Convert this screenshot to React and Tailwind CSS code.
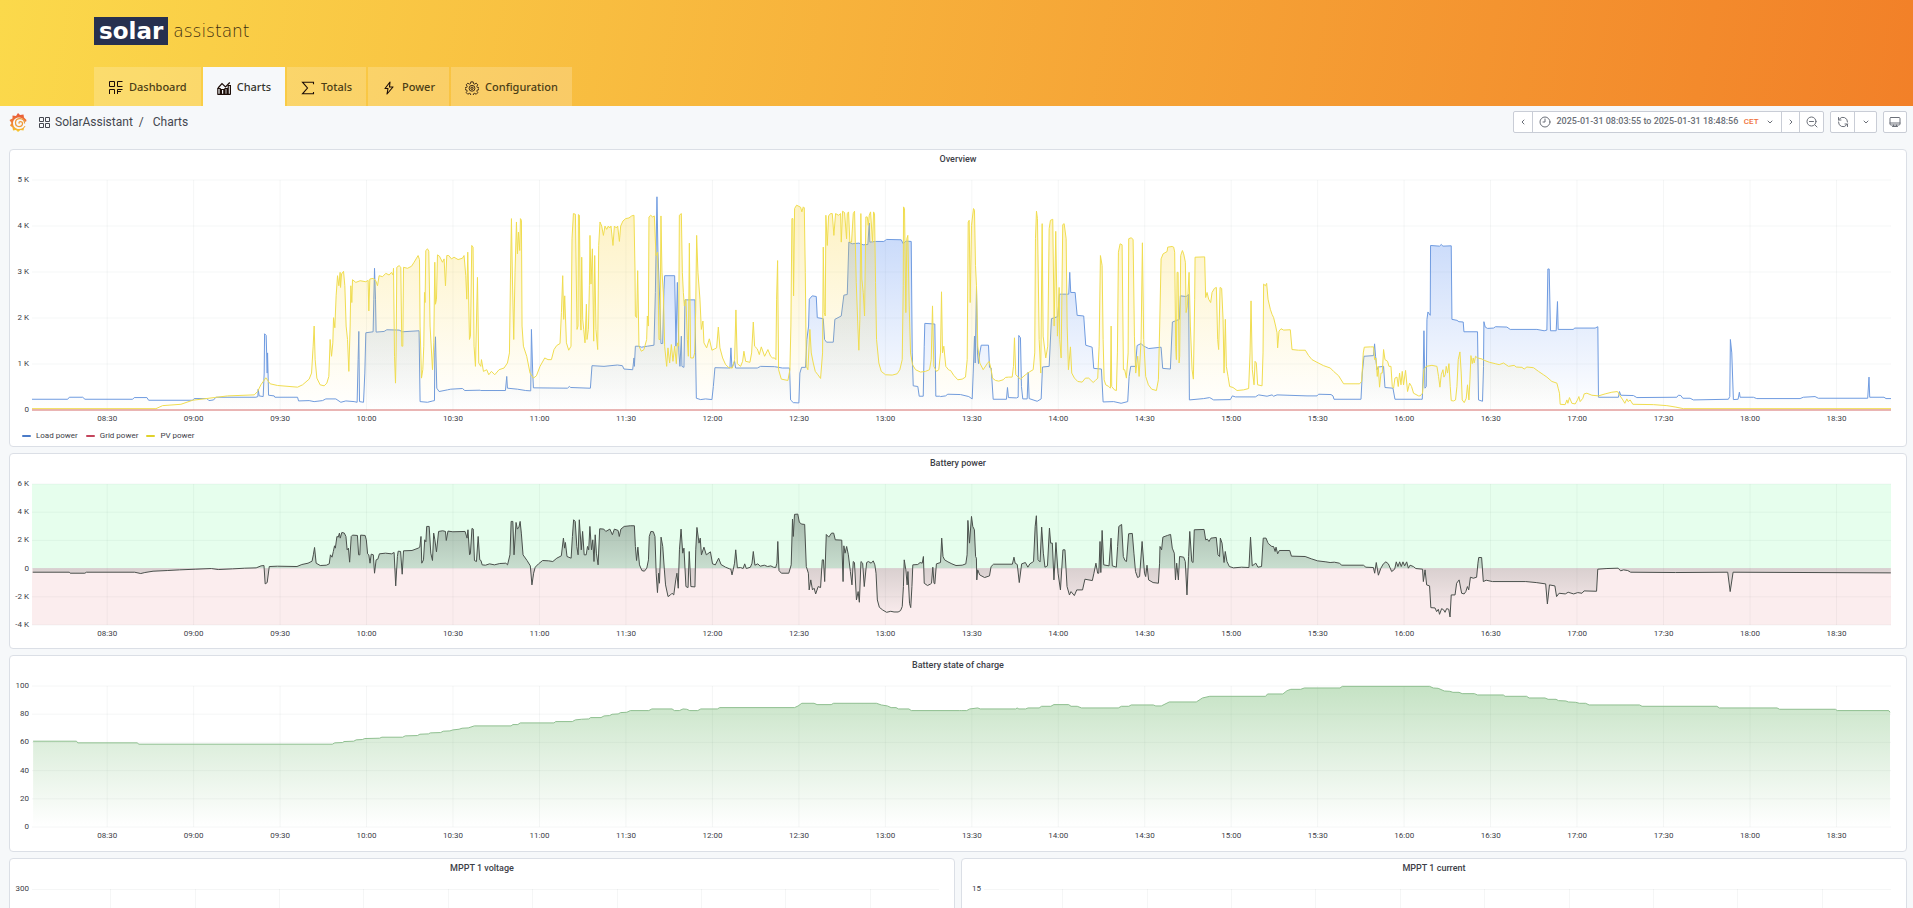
import { useId } from 'react';

const TABS = [
  { label: 'Dashboard', icon: DashboardIcon },
  { label: 'Charts', icon: ChartsIcon, active: true },
  { label: 'Totals', icon: TotalsIcon },
  { label: 'Power', icon: PowerIcon },
  { label: 'Configuration', icon: GearIcon },
];

// Visible range: 08:03:55 to 18:48:56
const RANGE = 38701;
const FIRST_TICK = 1565;
const TICK_STEP = 1800;
const TIMES = [
  '08:30', '09:00', '09:30', '10:00', '10:30', '11:00', '11:30', '12:00', '12:30', '13:00', '13:30',
  '14:00', '14:30', '15:00', '15:30', '16:00', '16:30', '17:00', '17:30', '18:00', '18:30',
];

// Each block: first x, samples per unit, "x,y" pairs
const LOAD_POWER = [
  [0, 3, '93,778 200,778 205,772 245,772 252,778 395,778 400,773 438,773 443,781 575,781 580,776 618,776 624,782 638,780 645,772 765,772 771,770 772,748 775,768 787,770 790,700 791,583 796,588 799,700 800,640 803,766 820,768 822,772 890,772 893,783 925,782 940,785 965,782 975,777 1005,777 1020,787 1035,783 1060,785 1069,787 1072,660 1074,576 1076,785 1088,787 1092,700 1095,580 1117,577 1119,480 1121,388 1124,480 1126,578 1150,576 1158,571 1195,572 1205,577 1255,574 1258,785 1280,787 1296,783 1301,782 1302,640 1304,592 1308,745 1315,755 1340,750 1350,748 1385,746 1392,752 1438,751'],
  [470, 3, '30,752 104,752 108,710 110,745 140,748 165,752 180,753 182,570 186,700 188,744 290,745 296,740 300,743 355,745 359,745 364,678 400,680 440,676 455,678 460,688 486,690 490,655 491,680 494,620 505,620 512,623 530,620 550,617 554,460 559,175 562,340 568,500 571,612 576,612 580,450 582,410 612,410 616,620 620,430 625,640 628,680 632,590 634,680 640,683 643,482 673,482 675,640 677,775 690,779 705,777 724,779 728,740 733,684 778,685 781,625 784,684 792,665 795,685 860,685 870,680 912,681 935,685 957,685 960,780 968,788 985,789 988,700 993,683 1005,683 1009,600 1014,560 1016,480 1025,470 1037,472 1040,535 1058,538 1062,600 1068,608 1088,608 1093,540 1112,530 1120,468 1130,466 1135,310 1145,315 1165,313 1178,318 1192,317 1196,253 1198,310 1215,308 1240,308 1248,302 1292,303 1298,315 1306,307 1322,308 1325,640 1328,738 1342,740 1346,769 1358,769 1361,620 1363,552 1393,554 1396,769 1408,769'],
  [940, 3, '0,770 15,768 22,763 60,764 85,770 95,777 98,700 102,590 104,670 108,445 111,640 114,672 118,640 122,617 144,617 147,683 152,685 158,778 198,778 201,743 204,773 228,774 233,772 235,588 240,595 243,740 247,777 260,777 263,697 266,776 290,784 302,777 306,682 326,680 333,538 352,532 357,465 385,465 388,400 391,460 404,460 410,528 430,530 436,617 455,623 460,686 483,688 488,786 520,785 542,790 562,785 566,710 571,680 585,680 590,618 602,612 610,620 615,622 625,627 662,623 667,686 690,688 696,548 717,540 720,470 737,472 745,466 747,780 790,776 808,773 820,780 870,779 876,768 885,771 945,771 955,765 980,769 995,765 1000,769 1010,765 1100,768 1130,768 1135,763 1172,764 1178,768 1181,778 1262,778 1266,700 1271,650 1300,648 1303,613 1306,650 1310,690 1314,682 1330,680 1334,743 1358,745 1364,778 1440,778'],
  [1400, 3, '66,778 69,690 71,574 74,745 78,740 80,540 83,518 90,528 91,320 118,322 123,317 128,322 153,321 155,540 170,543 176,547 189,548 191,577 232,577 235,780 247,784 250,680 251,547 255,563 262,567 280,566 286,562 320,563 330,570 410,570 432,574 440,572 443,390 447,390 451,574 468,574 472,487 474,570 520,570 523,566 585,566 593,562 595,772 655,772 658,755 662,766 700,767 710,773 830,772 835,766 842,767 848,775 870,775 880,780 985,778 989,770 991,600 995,640 1000,779 1014,778 1018,757 1020,772 1060,772 1070,776 1200,776 1210,772 1245,770 1255,775 1403,775 1407,712 1409,772 1452,772 1458,776 1473,776'],
];

const PV_POWER = [
  [0, 3, '93,806 465,806 485,797 540,793 575,781 640,773 680,768 760,765 770,755 780,735 795,714 808,732 830,737 890,742 905,735 925,718 932,700 937,620 940,560 943,660 948,715 958,735 970,738 978,730 984,710 988,600 992,650 996,610 998,535 1002,565 1006,470 1010,410 1014,440 1018,400 1019,445 1022,405 1028,397 1032,440 1036,560 1040,600 1044,695 1048,560 1050,440 1053,490 1055,422 1065,430 1078,425 1095,428 1102,424 1104,515 1107,420 1117,418 1125,425 1130,440 1135,410 1145,413 1155,403 1165,408 1172,400 1177,408 1178,388 1181,650 1184,730 1186,640 1188,385 1195,380 1200,385 1203,620 1206,620 1208,385 1220,388 1232,382 1240,370 1246,360 1252,350 1256,362 1258,560 1262,715 1266,690 1269,620 1271,460 1273,490 1275,335 1280,330 1284,337 1288,560 1295,690 1299,610 1302,370 1304,495 1307,480 1310,348 1316,352 1325,370 1330,360 1334,440 1338,350 1344,350 1352,360 1360,355 1372,362 1385,358 1390,350 1395,410 1398,480 1401,340 1406,600 1409,590 1413,320 1417,325 1420,620 1424,680 1430,415 1434,670 1440,680'],
  [470, 3, '32,660 38,695 48,690 54,705 62,695 72,705 85,690 100,685 110,670 116,640 119,420 122,240 125,420 129,600 133,400 137,250 140,345 143,280 147,335 149,240 152,245 154,560 158,620 168,650 178,700 188,715 197,708 208,680 222,655 232,660 242,660 250,630 258,618 268,612 272,520 276,410 279,540 282,470 287,610 294,632 301,620 304,300 308,225 314,227 319,570 322,560 323,228 326,230 329,540 331,572 333,355 336,540 339,570 343,610 347,495 349,600 353,570 356,440 358,290 361,435 365,330 369,605 372,350 376,570 381,630 384,320 388,250 393,262 398,290 403,262 408,272 413,262 417,268 421,262 427,320 431,262 437,268 441,262 446,308 450,262 457,247 465,240 475,238 483,232 490,230 493,390 494,530 498,535 501,395 505,620 512,635 520,630 528,600 530,530 533,560 535,235 540,230 546,235 551,232 556,350 561,340 565,600 568,600 571,232 574,400 578,460 582,620 588,680 592,625 597,670 602,615 607,665 612,620 617,672 620,610 624,620 626,230 632,225 635,400 638,460 641,500 646,480 650,600 653,650 656,313 660,655 668,655 672,640 675,520 678,290 682,400 688,480 692,570 697,545 700,610 708,625 716,598 724,632 732,628 738,625 743,563 748,625 756,655 765,675 775,684 785,685 792,660 796,512 800,672 810,680 816,665 820,635 825,665 838,668 843,640 848,548 852,620 860,628 866,645 872,622 882,650 892,630 900,650 906,655 912,655 916,660 918,480 921,365 924,690 932,718 952,722 958,690 961,560 964,240 967,240 969,470 972,210 978,200 990,206 994,220 998,205 1001,208 1004,400 1007,680 1012,690 1018,570 1022,640 1028,670 1034,695 1042,705 1050,716 1056,640 1058,325 1061,520 1064,530 1066,230 1070,320 1074,232 1080,225 1085,225 1090,290 1095,225 1104,230 1110,225 1112,310 1116,218 1122,222 1128,300 1130,225 1134,220 1138,310 1143,310 1148,225 1152,218 1157,430 1162,560 1165,632 1168,540 1171,225 1174,420 1178,460 1182,530 1186,235 1190,235 1193,260 1196,230 1200,220 1206,310 1209,220 1212,225 1215,430 1218,600 1225,670 1232,695 1245,705 1265,706 1280,702 1288,690 1295,660 1298,440 1299,205 1302,210 1306,520 1309,300 1312,290 1316,500 1320,640 1326,675 1335,690 1350,697 1365,695 1377,690 1382,660 1386,500 1390,680 1398,695 1405,690 1410,640 1413,458 1416,640 1420,620 1426,680 1434,690 1438,692'],
  [940, 3, '30,692 40,707 52,720 65,718 75,712 80,660 83,250 86,245 89,490 93,260 99,210 102,215 105,380 108,440 112,620 118,670 128,690 140,672 146,665 152,690 156,715 165,722 175,724 188,720 195,713 205,712 215,712 219,680 222,595 226,705 240,718 255,705 268,696 278,690 283,640 285,300 288,218 291,240 296,600 301,700 305,255 308,590 316,655 322,620 326,270 330,245 337,242 341,560 346,278 351,590 356,445 358,600 362,655 367,258 371,255 377,300 380,560 384,690 390,622 394,700 402,715 412,725 425,727 435,715 445,715 458,728 465,722 472,715 476,620 480,350 485,380 488,600 491,720 496,735 505,740 510,745 512,560 514,740 522,750 528,752 531,640 534,340 539,315 545,318 549,690 553,690 558,715 563,640 565,300 572,297 578,302 582,590 586,700 592,650 596,710 602,600 606,312 610,600 616,710 624,735 634,748 648,752 654,720 658,560 662,360 668,345 680,338 682,325 695,323 700,325 703,340 706,620 708,660 710,400 713,400 716,670 718,650 721,350 726,335 730,345 735,370 737,520 741,500 746,400 750,560 755,690 759,718 763,480 764,355 793,354 796,475 800,460 805,480 811,490 815,460 822,448 828,445 832,600 835,630 839,445 844,448 848,540 851,700 855,540 858,680 863,710 868,740 878,743 890,752 910,750 925,746 929,640 932,485 936,690 941,735 944,665 948,670 952,735 965,738 968,640 970,435 975,440 979,433 983,480 990,510 995,525 1000,535 1006,560 1010,580 1012,625 1016,575 1022,568 1030,572 1050,571 1055,630 1075,632 1095,632 1105,648 1115,660 1130,668 1150,678 1170,685 1180,695 1195,708 1210,732 1258,732 1264,725 1269,640 1272,623 1290,622 1300,622 1303,660 1307,655 1311,710 1314,680 1318,742 1322,700 1326,700 1330,630 1334,660 1342,665 1346,680 1352,680 1356,740 1360,745 1364,715 1370,712 1374,740 1378,700 1382,735 1386,695 1390,735 1396,692 1402,755 1408,730 1414,740 1420,760 1435,768 1440,768'],
  [1400, 3, '62,765 67,760 71,690 78,680 95,677 110,680 115,710 119,742 123,705 128,690 131,712 135,705 138,680 142,700 146,672 150,740 153,782 160,783 166,780 170,740 174,660 179,637 183,700 186,780 192,788 198,775 202,735 206,780 209,720 212,648 216,672 219,655 222,670 226,650 232,655 245,658 252,662 268,668 285,672 297,675 310,670 325,680 342,677 348,682 365,683 372,688 380,682 400,684 415,695 430,705 440,712 455,725 470,730 474,745 478,760 480,793 495,794 500,780 503,790 508,773 515,790 525,792 532,780 536,770 540,785 548,775 552,762 560,760 575,766 595,768 615,762 635,757 652,755 660,768 668,780 674,790 680,777 684,785 690,780 698,793 760,794 800,797 825,801 850,806 1473,806'],
];

const BATTERY_POWER = [
  [0, 2.45, '80,397 170,397 172,400 208,400 212,397 330,397 345,401 355,398 375,394 410,392 440,390 480,388 518,386 535,389 570,387 600,385 628,384 640,378 647,377 650,432 655,428 660,380 680,379 728,380 740,374 755,370 765,364 768,345 771,323 775,370 785,377 800,376 807,372 810,345 814,352 817,335 820,318 822,325 826,290 829,292 832,280 834,295 838,278 844,280 848,290 851,330 854,325 857,367 861,290 864,286 876,287 879,345 882,345 884,286 895,287 898,300 901,342 904,345 907,370 910,343 915,345 918,400 922,360 926,358 930,342 945,340 960,342 966,338 970,438 974,350 976,334 982,335 986,403 989,333 1010,332 1025,325 1029,322 1032,290 1034,370 1038,360 1041,300 1044,306 1046,260 1052,260 1056,340 1060,362 1063,280 1066,300 1070,336 1075,275 1085,273 1092,275 1094,302 1098,274 1110,276 1140,275 1145,295 1147,270 1151,345 1153,342 1157,266 1160,268 1163,362 1168,365 1172,290 1176,360 1179,362 1182,375 1190,376 1200,372 1212,375 1225,371 1240,370 1244,375 1250,345 1253,245 1257,245 1260,345 1265,248 1268,268 1272,262 1275,245 1278,280 1282,345 1292,362 1300,378 1304,435 1308,400 1312,382 1320,372 1330,362 1345,363 1355,365 1365,355 1376,348 1381,295 1384,325 1386,308 1390,350 1400,355 1403,290 1406,240 1410,245 1414,320 1417,345 1420,240 1425,330 1428,275 1432,345 1437,345 1440,320 1443,330 1446,260 1450,330 1453,300 1456,365 1459,285 1462,340 1466,375 1470,267 1480,268 1485,275 1495,268 1501,285 1506,268 1515,272 1518,290 1522,268 1530,260 1545,258 1555,258'],
  [630, 2.45, '14,320 17,362 20,322 24,375 30,392 36,394 42,385 46,360 48,290 52,275 58,276 62,290 65,400 68,458 71,400 73,430 77,292 81,320 85,390 88,435 94,470 100,465 104,460 108,465 113,420 116,400 119,445 122,330 126,268 130,340 133,325 138,440 143,443 146,335 150,440 160,441 162,330 165,263 170,310 173,295 176,345 182,322 188,345 198,336 203,372 210,375 218,355 224,374 235,382 245,387 248,388 251,405 254,388 257,370 260,330 264,384 272,383 278,386 282,372 286,386 296,382 300,370 303,335 307,376 314,372 320,379 330,376 338,380 346,378 352,382 358,383 361,370 363,305 366,392 372,400 390,400 396,375 399,238 401,290 404,224 412,223 416,248 422,253 429,254 433,380 438,400 440,450 444,420 448,450 452,445 456,462 462,440 468,443 472,360 475,360 478,425 482,284 488,292 495,280 500,280 504,300 520,301 523,425 525,318 528,340 532,320 536,345 541,395 545,435 548,365 551,368 556,480 560,455 563,487 567,365 571,370 575,440 581,368 585,365 592,370 597,363 601,375 604,400 607,480 612,502 620,510 630,517 640,514 648,516 658,516 664,512 668,500 671,440 673,360 677,390 680,435 682,395 686,490 689,503 692,440 694,375 706,374 712,368 717,370 720,350 722,430 730,437 738,432 740,430 743,382 746,430 748,432 752,372 762,368 765,295 768,350 772,360 780,366 790,372 800,377 815,376 824,372 827,345 829,242 833,310 838,230 841,260 845,270 848,350 850,355 851,420 853,390 858,405 870,413 882,408 886,380 892,373 938,373 942,352 945,370 950,374 955,428 961,372 970,368 976,382 981,372 990,365 994,260 997,228 1001,360 1006,366 1010,262 1014,340 1018,382 1024,378 1029,265 1032,310 1036,310 1040,420 1045,308 1050,400 1056,450 1062,330 1067,330 1072,440 1078,465 1082,455 1090,467 1096,450 1110,450 1116,418 1134,422 1138,400 1143,370 1147,400 1150,400 1153,305 1155,398 1158,272 1162,375 1175,378 1180,295 1183,378 1193,382 1196,320 1199,260 1206,254 1210,350 1214,362 1218,365 1223,282 1232,281 1236,340 1240,395 1245,413 1250,410 1256,305 1262,400 1265,410 1268,376 1272,420 1283,428 1296,430 1299,370 1300,320 1304,330 1307,292 1318,287 1326,284 1330,325 1335,340 1338,420 1341,370 1345,420 1348,350 1358,352 1362,365 1366,465 1370,350 1373,275 1378,365 1381,368 1384,270 1408,269 1412,300 1416,298 1420,305 1425,295 1438,293 1442,345 1446,350 1448,295 1452,310 1457,368 1460,335 1464,365 1470,380 1480,384 1500,382 1518,383 1522,292 1526,378 1535,370 1540,382 1549,380 1553,295 1560,295 1564,308'],
  [1260, 2.401, '22,312 30,320 34,320 38,335 40,322 44,342 48,332 73,332 77,349 110,350 125,357 140,363 160,366 170,368 180,367 192,370 198,376 250,376 256,382 274,383 277,400 281,368 286,406 292,385 298,372 304,366 310,372 318,395 325,388 329,366 333,380 337,366 341,380 345,366 349,378 354,366 358,385 362,376 370,380 376,386 392,388 394,425 398,390 402,435 409,438 412,503 422,504 426,515 430,508 433,523 438,506 443,510 446,517 450,506 455,508 458,531 461,465 470,465 474,430 480,420 486,460 492,462 496,455 500,440 503,450 507,412 514,415 522,412 525,370 527,353 534,353 538,425 545,421 560,425 640,425 665,428 688,432 692,492 697,435 710,438 714,470 720,460 735,462 742,457 755,462 765,458 775,460 780,453 810,454 813,388 835,386 862,385 868,393 875,390 885,392 892,397 1000,398 1125,397 1131,455 1138,397 1517,399'],
];

const STATE_OF_CHARGE = [
  [0, 1.633, '54,302 125,302 127,307 224,307 227,311 543,311 547,307 560,306 562,303 578,302 582,298 592,297 596,294 620,293 624,290 658,290 662,286 682,285 686,281 700,280 703,277 720,276 724,272 735,271 740,268 750,266 755,263 765,262 775,256 835,256 838,252 846,252 850,247 905,247 908,243 935,243 940,238 950,236 962,235 965,231 982,231 987,226 996,225 1000,221 1010,220 1014,216 1024,215 1030,210 1060,210 1065,205 1098,205 1102,210 1110,210 1116,205 1122,206 1127,210 1140,210 1145,205 1172,205 1176,201 1298,201 1304,196 1310,188 1330,188 1335,192 1358,192 1362,188 1432,188 1440,193 1450,196 1456,201 1464,201 1468,205 1485,205 1489,210 1568,210'],
  [950, 1.628, '20,210 28,210 33,205 46,202 50,205 108,205 110,202 113,205 124,205 128,202 146,202 150,197 165,197 170,192 194,192 198,197 208,197 215,202 275,202 280,197 292,197 296,193 332,193 336,196 345,196 358,184 402,184 412,172 424,167 515,167 518,160 543,160 550,150 556,146 572,146 578,142 636,142 640,137 782,137 788,142 796,143 806,151 815,152 820,155 830,155 835,159 855,159 860,163 902,163 905,167 940,167 944,172 970,172 975,176 988,176 992,180 1004,181 1008,184 1020,185 1026,188 1036,188 1042,193 1124,193 1128,197 1250,197 1254,202 1348,202 1352,206 1443,206 1446,210 1530,210 1532,215'],
];

function toPoints(blocks) {
  return blocks.flatMap(([start, density, samples]) =>
    samples.split(' ').map((pair) => {
      const [x, y] = pair.split(',').map(Number);
      return [Math.round((start + x / density) * 10) / 10, y];
    })
  );
}

function Series({ blocks, baseline, color, fill = color, fillTop, fillBottom = 0 }) {
  const id = useId();
  const points = toPoints(blocks);
  const line = points.map((p) => p.join(',')).join(' ');
  const first = points[0][0];
  const last = points[points.length - 1][0];

  return (
    <g>
      <linearGradient id={id} x1="0" y1="0" x2="0" y2="1">
        <stop offset="0" stopColor={fill} stopOpacity={fillTop} />
        <stop offset="1" stopColor={fill} stopOpacity={fillBottom} />
      </linearGradient>
      <polygon points={`${first},${baseline} ${line} ${last},${baseline}`} fill={`url(#${id})`} />
      <polyline points={line} fill="none" stroke={color} strokeWidth="1" strokeLinejoin="round" vectorEffect="non-scaling-stroke" />
    </g>
  );
}

function GridLines({ box, rows, every = 1 }) {
  const [x, y, width, height] = box;
  return (
    <g stroke="#1f2937" strokeOpacity="0.045" shapeRendering="crispEdges">
      {Array.from({ length: rows + 1 }, (_, i) => (
        <line key={`h${i}`} x1={x} x2={x + width} y1={y + (height * i) / rows} y2={y + (height * i) / rows} vectorEffect="non-scaling-stroke" />
      ))}
      {TIMES.map((time, i) => {
        if (every === 2 && i % 2 === 0) return null;
        const tx = x + (width * (FIRST_TICK + i * TICK_STEP)) / RANGE;
        return <line key={time} x1={tx} x2={tx} y1={y} y2={y + height} vectorEffect="non-scaling-stroke" />;
      })}
    </g>
  );
}

function TimeAxis() {
  const before = FIRST_TICK - TICK_STEP / 2;
  const after = RANGE - before - TIMES.length * TICK_STEP;
  return (
    <div className="mt-1 flex text-[8px] leading-[10px]">
      <span style={{ flex: `${before} 0 0` }} />
      {TIMES.map((time) => (
        <span key={time} className="flex justify-center" style={{ flex: `${TICK_STEP} 0 0` }}>
          <span>{time}</span>
        </span>
      ))}
      <span style={{ flex: `${after} 0 0` }} />
    </div>
  );
}

function Panel({ title, className, children }) {
  return (
    <section className={`flex flex-col overflow-hidden rounded-sm border border-[#dbdfe6] bg-white ${className}`}>
      <h2 className="mb-3 text-center text-[9px] font-medium leading-[18px]">{title}</h2>
      {children}
    </section>
  );
}

function Chart({ labels, plotHeight, box, timeAxis = true, children }) {
  return (
    <div className="flex pr-[15px]">
      <div className={`flex w-[22px] shrink-0 flex-col justify-between pr-[3px] text-[8px] ${plotHeight}`}>
        {labels.map((label) => (
          <span key={label} className="flex h-0 items-center justify-end whitespace-nowrap">{label}</span>
        ))}
      </div>
      <div className="min-w-0 flex-1">
        <svg className={`block w-full overflow-visible ${plotHeight}`} viewBox={box.join(' ')} preserveAspectRatio="none" aria-hidden="true">
          {children}
        </svg>
        {timeAxis && <TimeAxis />}
      </div>
    </div>
  );
}

function LegendItem({ color, label }) {
  return (
    <li className="flex items-center gap-[5px]">
      <span className={`h-[2px] w-[9px] rounded-full ${color}`} />
      {label}
    </li>
  );
}

function DashboardIcon() {
  return (
    <svg className="h-[15px] w-[15px]" viewBox="0 0 15 15" fill="none" stroke="currentColor" aria-hidden="true">
      <path d="M1.500 1.500h5v5h-5zM14.500 1.500h-5v5h5M1.500 14V9.500h5V14M14.500 9.500h-5V14M10 11.500h3" />
    </svg>
  );
}

function ChartsIcon() {
  return (
    <svg className="h-[14px] w-[14px]" viewBox="0 0 14 14" fill="none" stroke="currentColor" strokeWidth="1.2" aria-hidden="true">
      <path d="M.8 13.400V7.500h2.400v5.900M4.400 13.400V8.500h2.400v4.900M8 13.400V7.500h2v5.900M11.200 13.400V4.500h2.200v8.900M.5 13.400h13" />
      <path d="M1 7 5 2.500l3.500 3.500 4.300-4.500" />
    </svg>
  );
}

function TotalsIcon() {
  return (
    <svg className="h-[14px] w-[14px]" viewBox="0 0 14 14" fill="none" stroke="currentColor" strokeWidth="1.1" aria-hidden="true">
      <path d="M12.500 3.200V1.200H1.500L6.500 7l-5 5.800h11v-1.800" />
    </svg>
  );
}

function PowerIcon() {
  return (
    <svg className="h-[14px] w-[14px]" viewBox="0 0 14 14" fill="none" stroke="currentColor" strokeWidth="1.1" strokeLinejoin="round" aria-hidden="true">
      <path d="M8 1 3 7.500h3L5 13l6-7H7.500z" />
    </svg>
  );
}

function GearIcon() {
  return (
    <svg className="h-[14px] w-[14px]" viewBox="0 0 24 24" fill="none" stroke="currentColor" strokeWidth="1.4" strokeLinejoin="round" aria-hidden="true">
      <path d="M10 1.500h4l.6 3 2 .9 2.600-1.700 2.700 2.800-1.600 2.500.8 2 3 .7v3l-3 .7-.8 2 1.600 2.600-2.700 2.700-2.600-1.600-2 .8-.6 3h-4l-.6-3-2-.8-2.600 1.600-2.700-2.700 1.600-2.600-.8-2-3-.7v-3l3-.7.8-2L2.100 6.500l2.700-2.800 2.600 1.700 2-.9z" />
      <circle cx="12" cy="12.500" r="5" />
      <circle cx="12" cy="12.500" r="2" />
    </svg>
  );
}

function GrafanaLogo() {
  return (
    <svg className="h-[19px] w-[18px]" viewBox="0 0 36 38" fill="none" aria-hidden="true">
      <defs>
        <linearGradient id="grafana-flame" x1="0" y1="0" x2="0" y2="1">
          <stop offset="0" stopColor="#e8553a" />
          <stop offset="0.6" stopColor="#f08a33" />
          <stop offset="1" stopColor="#f8cf2f" />
        </linearGradient>
      </defs>
      <path
        fill="url(#grafana-flame)"
        fillRule="evenodd"
        d="M18 0l4 4 7-1 1 6 5 5-1 4-4-3c-2-4-6-6-10-6-7 0-12 5-12 11 0 7 5 12 12 12 6 0 10-3 11-6l2 1-3 3-1 5-6-1-5 4-4-4-6 1-1-6-5-4 3-5-4-6 6-3 0-6 7 1z"
      />
      <path d="M31 21c1-6-4-10-9-10-6 0-9 4-9 8 0 5 3 8 7 8 5 0 7-3 7-6 0-2-2-4-4-4-3 0-4 3-2 4" stroke="#f09a38" strokeWidth="2.500" />
    </svg>
  );
}

function ToolIcon({ children, className = 'h-3 w-3' }) {
  return (
    <svg className={`shrink-0 ${className}`} viewBox="0 0 24 24" fill="none" stroke="currentColor" strokeWidth="2" strokeLinecap="round" strokeLinejoin="round" aria-hidden="true">
      {children}
    </svg>
  );
}

function ToolGroup({ children }) {
  return (
    <div className="flex h-[22px] divide-x divide-[#c9cdd6] rounded-[2px] border border-[#c9cdd6] bg-white text-[#6b6f78]">
      {children}
    </div>
  );
}

function Toolbar() {
  return (
    <div className="flex gap-[6px]">
      <ToolGroup>
        <button type="button" aria-label="Move time range backwards" className="flex w-[19px] items-center justify-center">
          <ToolIcon><path d="m14 8-4 4 4 4" /></ToolIcon>
        </button>
        <button type="button" className="flex w-[249px] items-center justify-between whitespace-nowrap pl-[6px] pr-[5px] text-[9px] font-medium">
          <ToolIcon><circle cx="12" cy="12" r="10" /><path d="M12 6v6H8" /></ToolIcon>
          <span>2025-01-31 08:03:55 to 2025-01-31 18:48:56</span>
          <span className="text-[8px] text-[#f0703a]">CET</span>
          <ToolIcon><path d="m8 10 4 4 4-4" /></ToolIcon>
        </button>
        <button type="button" aria-label="Move time range forwards" className="flex w-[18px] items-center justify-center">
          <ToolIcon><path d="m10 8 4 4-4 4" /></ToolIcon>
        </button>
        <button type="button" aria-label="Zoom out" className="flex w-[23px] items-center justify-center">
          <ToolIcon><circle cx="11" cy="11" r="9" /><path d="M7 11h8M18 18l4 4" /></ToolIcon>
        </button>
      </ToolGroup>
      <ToolGroup>
        <button type="button" aria-label="Refresh" className="flex w-[24px] items-center justify-center">
          <ToolIcon><path d="M21 12A9 9 0 0 0 5 6L3 8M3 3v5h5M3 12a9 9 0 0 0 16 6l2-2M21 21v-5h-5" /></ToolIcon>
        </button>
        <button type="button" aria-label="Refresh interval" className="flex w-[21px] items-center justify-center">
          <ToolIcon><path d="m8 10 4 4 4-4" /></ToolIcon>
        </button>
      </ToolGroup>
      <ToolGroup>
        <button type="button" aria-label="Cycle view mode" className="flex w-[22px] items-center justify-center">
          <ToolIcon><rect x="2" y="3" width="20" height="15" rx="2" /><path d="M2 14h20M9 18v3M15 18v3M7 21h10" /></ToolIcon>
        </button>
      </ToolGroup>
    </div>
  );
}

const OVERVIEW_BOX = [31, 125, 1860, 685];
const BATTERY_BOX = [32, 133, 1860, 422];
const CHARGE_BOX = [32, 136, 1860, 424];
const MPPT_BOX = [0, 0, 900, 141];

export default function App() {
  return (
    <div className="flex h-screen flex-col overflow-hidden bg-[#f6f8fa] font-['Roboto',sans-serif] text-[#3d4047]">
      <header className="flex flex-col gap-[22px] bg-[linear-gradient(100deg,#fbd94b,#f28028)] pl-[94px] pt-[17px]">
        <a href="#home" className="flex items-center gap-[5px] self-start font-['DejaVu_Sans',sans-serif]">
          <span className="flex h-7 items-center bg-[#27304f] px-[5px] text-[23px] font-bold leading-none text-white">solar</span>
          <span className="text-[17px] font-extralight leading-none text-[#3a2c10]">assistant</span>
        </a>
        <nav className="flex gap-[2px] font-['Noto_Sans',sans-serif] text-[11px]">
          {TABS.map(({ label, icon: Icon, active }) => (
            <a
              key={label}
              href={`#${label.toLowerCase()}`}
              aria-current={active ? 'page' : undefined}
              className={`flex h-[39px] items-center gap-[6px] px-[14px] pt-[2px] font-medium ${
                active ? 'bg-[#f6f8fa] text-[#33332c]' : 'bg-white/20 text-[#4b3d16]'
              }`}
            >
              <span className="text-[#1c0d08]"><Icon /></span>
              {label}
            </a>
          ))}
        </nav>
      </header>

      <main className="flex-1 overflow-y-auto pl-[9px] pr-[6px] [scrollbar-width:none]">
        <div className="mb-[11px] flex h-8 items-center justify-between">
          <div className="flex items-center text-xs text-[#44474f]">
            <GrafanaLogo />
            <svg className="ml-[12px] h-[11px] w-[11px]" viewBox="0 0 11 11" fill="none" stroke="currentColor" aria-hidden="true">
              <path d="M.5.5h4v4h-4zM6.500.5h4v4h-4zM.5 6.500h4v4h-4zM6.500 6.500h4v4h-4z" />
            </svg>
            <a href="#solarassistant" className="ml-[5px]">SolarAssistant</a>
            <span className="ml-[6px]">/</span>
            <a href="#charts" className="ml-[9px]">Charts</a>
          </div>
          <Toolbar />
        </div>

        <div className="grid grid-cols-2 gap-[6px]">
          <Panel title="Overview" className="col-span-2 h-[298px]">
            <Chart labels={['5 K', '4 K', '3 K', '2 K', '1 K', '0']} plotHeight="h-[230px]" box={OVERVIEW_BOX}>
              <GridLines box={OVERVIEW_BOX} rows={5} />
              <Series blocks={LOAD_POWER} baseline={810} color="#6f9be0" fill="#5b8ff0" fillTop={0.4} />
              <Series blocks={PV_POWER} baseline={810} color="#f0dd50" fill="#fad02a" fillTop={0.28} />
              <line x1="31" x2="1891" y1="810" y2="810" stroke="#d9706f" vectorEffect="non-scaling-stroke" />
            </Chart>
            <ul className="mt-[7px] flex gap-2 pl-[12px] text-[8px] leading-[10px]">
              <LegendItem color="bg-[#4a7bc8]" label="Load power" />
              <LegendItem color="bg-[#c4455c]" label="Grid power" />
              <LegendItem color="bg-[#e0d22c]" label="PV power" />
            </ul>
          </Panel>

          <Panel title="Battery power" className="col-span-2 h-[196px]">
            <Chart labels={['6 K', '4 K', '2 K', '0', '-2 K', '-4 K']} plotHeight="h-[141px]" box={BATTERY_BOX}>
              <rect x="32" y="133" width="1860" height="252" fill="#e6feed" />
              <rect x="32" y="385" width="1860" height="170" fill="#fbedee" />
              <GridLines box={BATTERY_BOX} rows={5} />
              <Series blocks={BATTERY_POWER} baseline={385} color="#4a504c" fill="#3f4a44" fillTop={0.38} />
            </Chart>
          </Panel>

          <Panel title="Battery state of charge" className="col-span-2 h-[197px]">
            <Chart labels={['100', '80', '60', '40', '20', '0']} plotHeight="h-[141px]" box={CHARGE_BOX}>
              <GridLines box={CHARGE_BOX} rows={5} />
              <Series blocks={STATE_OF_CHARGE} baseline={560} color="#8fbf90" fill="#5fb05c" fillTop={0.36} />
            </Chart>
          </Panel>

          <Panel title="MPPT 1 voltage" className="h-[197px]">
            <Chart labels={['300']} plotHeight="h-[141px]" box={MPPT_BOX} timeAxis={false}>
              <GridLines box={MPPT_BOX} rows={3} every={2} />
            </Chart>
          </Panel>
          <Panel title="MPPT 1 current" className="h-[197px]">
            <Chart labels={['15']} plotHeight="h-[141px]" box={MPPT_BOX} timeAxis={false}>
              <GridLines box={MPPT_BOX} rows={3} every={2} />
            </Chart>
          </Panel>
        </div>
      </main>
    </div>
  );
}
